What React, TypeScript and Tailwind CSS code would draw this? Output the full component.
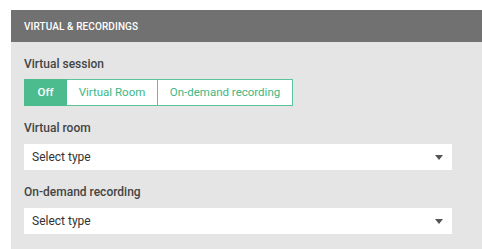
import React from "react";

function Caret() {
  return (
    <svg width="8" height="5" viewBox="0 0 8 5" className="shrink-0">
      <path d="M0 0 L8 0 L4 5 Z" fill="#555555" />
    </svg>
  );
}

function SelectBox() {
  return (
    <div className="w-[428px] h-[26px] bg-white flex items-center justify-between pl-[8px] pr-[9px] text-[12px] text-[#333333]">
      <span>Select type</span>
      <Caret />
    </div>
  );
}

export default function App() {
  return (
    <div
      className="w-[482px] h-[249px] bg-white pl-[11px] pt-[10px] overflow-hidden"
      style={{ fontFamily: "Roboto, 'Liberation Sans', sans-serif" }}
    >
      <div className="w-[471px] h-[239px] flex flex-col">
        <div className="h-[32px] bg-[#717171] flex items-center px-[13px] text-white text-[10px] font-medium uppercase tracking-[0.1px]">
          Virtual &amp; Recordings
        </div>
        <div className="flex-1 bg-[#e5e5e5] px-[13px] pt-[14px] flex flex-col">
          <div className="h-[16px] leading-[16px] text-[12px] font-medium text-[#444444]">Virtual session</div>
          <div className="mt-[7px] flex h-[27px] w-fit text-[11.5px]">
            <div className="w-[43px] bg-[#4cbb8e] border border-[#4cbb8e] text-white font-medium flex items-center justify-center">Off</div>
            <div className="w-[91px] bg-white border-y border-r border-[#5cc39a] text-[#3db784] flex items-center justify-center">Virtual Room</div>
            <div className="w-[135px] bg-white border-y border-r border-[#5cc39a] text-[#3db784] flex items-center justify-center">On-demand recording</div>
          </div>
          <div className="mt-[14px] h-[16px] leading-[16px] text-[12px] font-medium text-[#444444]">Virtual room</div>
          <div className="mt-[8px]"><SelectBox /></div>
          <div className="mt-[14px] h-[16px] leading-[16px] text-[12px] font-medium text-[#444444]">On-demand recording</div>
          <div className="mt-[8px]"><SelectBox /></div>
        </div>
      </div>
    </div>
  );
}
